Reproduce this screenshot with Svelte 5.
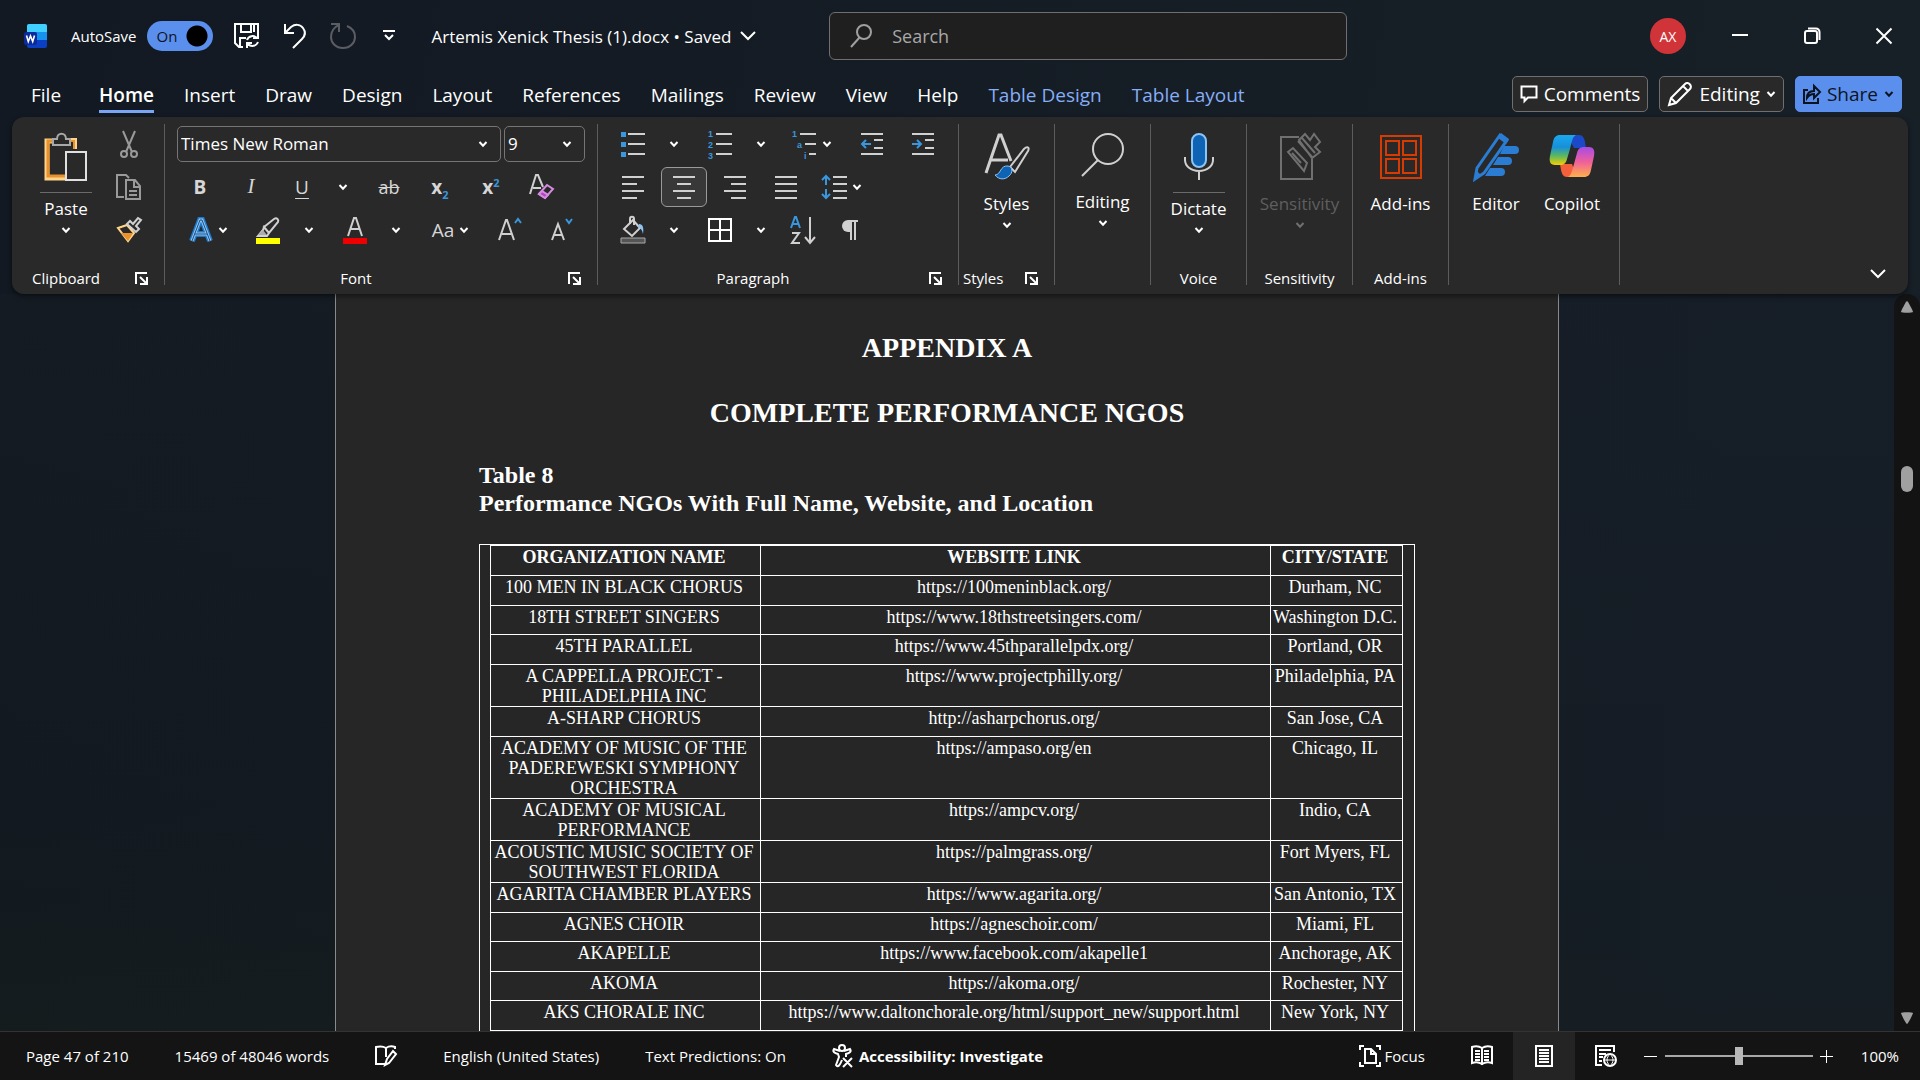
<script>
  let autosave = $state(true)
  let query = $state('')
  let font = $state('Times New Roman')
  let size = $state('9')
  let zoom = $state(100)
  let activeTab = $state('Home')
  let align = $state('center')
  let view = $state('print')

  const tabs = [
    'File', 'Home', 'Insert', 'Draw', 'Design', 'Layout', 'References',
    'Mailings', 'Review', 'View', 'Help', 'Table Design', 'Table Layout'
  ]

  // start and end of each bar in the four alignment icons
  const aligns = {
    left: [[0, 24], [0, 17], [0, 24], [0, 17]],
    center: [[0, 24], [4, 20], [0, 24], [4, 20]],
    right: [[0, 24], [7, 24], [0, 24], [7, 24]],
    justify: [[0, 24], [0, 24], [0, 24], [0, 24]]
  }

  const orgs = [
    ['100 MEN IN BLACK CHORUS', 'https://100meninblack.org/', 'Durham, NC'],
    ['18TH STREET SINGERS', 'https://www.18thstreetsingers.com/', 'Washington D.C.'],
    ['45TH PARALLEL', 'https://www.45thparallelpdx.org/', 'Portland, OR'],
    ['A CAPPELLA PROJECT - PHILADELPHIA INC', 'https://www.projectphilly.org/', 'Philadelphia, PA'],
    ['A-SHARP CHORUS', 'http://asharpchorus.org/', 'San Jose, CA'],
    ['ACADEMY OF MUSIC OF THE PADEREWESKI SYMPHONY ORCHESTRA', 'https://ampaso.org/en', 'Chicago, IL'],
    ['ACADEMY OF MUSICAL PERFORMANCE', 'https://ampcv.org/', 'Indio, CA'],
    ['ACOUSTIC MUSIC SOCIETY OF SOUTHWEST FLORIDA', 'https://palmgrass.org/', 'Fort Myers, FL'],
    ['AGARITA CHAMBER PLAYERS', 'https://www.agarita.org/', 'San Antonio, TX'],
    ['AGNES CHOIR', 'https://agneschoir.com/', 'Miami, FL'],
    ['AKAPELLE', 'https://www.facebook.com/akapelle1', 'Anchorage, AK'],
    ['AKOMA', 'https://akoma.org/', 'Rochester, NY'],
    ['AKS CHORALE INC', 'https://www.daltonchorale.org/html/support_new/support.html', 'New York, NY']
  ]
</script>

{#snippet chevron()}
  <svg class="chev" width="10" height="10" viewBox="0 0 10 10"><path d="M1.5 3 5 6.7 8.500 3" /></svg>
{/snippet}

{#snippet more(label)}
  <button class="more" aria-label={label}>{@render chevron()}</button>
{/snippet}

{#snippet launcher(label)}
  <button class="launcher" aria-label={label}>
    <svg width="13" height="13" viewBox="0 0 13 13"><path d="M1 12V1h11M5 5l6 6M12 5v7H5" /></svg>
  </button>
{/snippet}

<div class="app">
  <header class="titlebar">
    <svg class="logo" width="23" height="24" viewBox="0 0 23 24">
      <rect x="3" width="20" height="24" rx="2" fill="#0a3fc4" />
      <path d="M3 8h20v8H3z" fill="#1492ee" />
      <path d="M5 0h16a2 2 0 0 1 2 2v6H3V2a2 2 0 0 1 2-2z" fill="#3fd0ff" />
      <rect y="8" width="13" height="13" rx="2" fill="#0b2a9c" />
      <path d="M2.500 11.500 4.300 17.500 6.500 12 8.700 17.500 10.500 11.500" fill="none" stroke="#fff" stroke-width="1.600" />
    </svg>
    <label class="autosave">
      <span>AutoSave</span>
      <span class="switch">
        <input type="checkbox" role="switch" bind:checked={autosave} />
        <span class="state">{autosave ? 'On' : 'Off'}</span>
      </span>
    </label>
    <div class="quick">
      <button aria-label="Save">
        <svg width="26" height="26" viewBox="0 0 26 26">
          <path d="M9 24H5l-4-4V1h23v9M7 1v8h10V1M20 1v8M6 24v-9h6" />
          <path d="M13 17a6 6 0 0 1 10-2M24 10v5h-5M24 19a6 6 0 0 1-10 2M13 25v-5h5" />
        </svg>
      </button>
      <button aria-label="Undo">
        <svg width="26" height="26" viewBox="0 0 26 26"><path d="M3 1v9h9M3 10l6-6c4-3 9-3 12 1s2 8-1 11l-9 9" /></svg>
      </button>
      <button class="off" aria-label="Redo" disabled>
        <svg width="26" height="26" viewBox="0 0 26 26"><path d="M1 1h8v8M9 2C4 4 1 9 1 14c0 6 5 11 12 11s12-5 12-11c0-5-3-9-8-11" /></svg>
      </button>
      <button aria-label="Customize Quick Access Toolbar">
        <svg width="22" height="26" viewBox="0 0 22 26"><path d="M5 8h12M7 12l4 4 4-4" /></svg>
      </button>
    </div>
    <button class="docname">
      Artemis Xenick Thesis (1).docx • Saved
      <svg width="16" height="16" viewBox="0 0 16 16"><path d="m1 4 7 7 7-7" /></svg>
    </button>
    <label class="search">
      <svg width="22" height="24" viewBox="0 0 22 24"><circle cx="14" cy="8" r="7" /><path d="M9.500 13.500 1 23" /></svg>
      <input type="text" placeholder="Search" aria-label="Search" bind:value={query} />
    </label>
    <div class="window">
      <button class="avatar">AX</button>
      <button class="win" aria-label="Minimize">
        <svg width="18" height="18" viewBox="0 0 18 18"><path d="M1 8h16" /></svg>
      </button>
      <button class="win" aria-label="Restore">
        <svg width="18" height="18" viewBox="0 0 18 18"><rect x="2" y="4" width="12" height="12" rx="2" /><path d="M5 1.500h8a3.500 3.500 0 0 1 3.500 3.500v8" /></svg>
      </button>
      <button class="win" aria-label="Close">
        <svg width="18" height="18" viewBox="0 0 18 18"><path d="m1.500 1.500 15 15M16.500 1.500l-15 15" /></svg>
      </button>
    </div>
  </header>

  <nav class="tabs">
    {#each tabs as tab}
      <button class="tab" class:active={activeTab === tab} class:context={tab.startsWith('Table')} onclick={() => activeTab = tab}>{tab}</button>
    {/each}
    <div class="actions">
      <button class="action">
        <svg width="18" height="18" viewBox="0 0 18 18"><path d="M1.500 1.500h15v11H8L4.500 16v-3.500h-3z" /></svg>
        Comments
      </button>
      <button class="action">
        <svg width="26" height="26" viewBox="0 0 26 26"><path d="m2 24 2-7L18 3c3-3 8 2 5 5L9 22zM4 17l5 5M16 5l5 5" /></svg>
        Editing
        {@render chevron()}
      </button>
      <button class="action share">
        <svg width="18" height="20" viewBox="0 0 18 20"><path d="M5 6H1v13h14v-5M4 14c0-5 3-7 7-7V2l6 6-6 6v-4c-3 0-5 1-7 4z" /></svg>
        Share
        {@render chevron()}
      </button>
    </div>
  </nav>

  <section class="ribbon">
    <div class="group clipboard">
      <div class="body">
        <button class="big">
          <svg width="46" height="50" viewBox="0 0 46 50">
            <path d="M10 10H4v37h20" stroke="#ffd48a" stroke-width="5" />
            <path d="M10 10H5v35h19" stroke="#e8912d" stroke-width="3" />
            <path d="M26 9h6v9" stroke="#ffd48a" stroke-width="4" />
            <path d="M26 10h5v8" stroke="#e8912d" stroke-width="2" />
            <path d="M10 14V8h4c0-7 9-7 9 0h4v6z" fill="#292929" stroke="#a8a8a8" />
            <path d="M23 21h20v28H23z" fill="#292929" stroke="#e0e0e0" stroke-width="2" />
          </svg>
          <hr />
          Paste
          {@render chevron()}
        </button>
        <div class="side">
          <button class="tool" aria-label="Cut">
            <svg class="dim" width="24" height="28" viewBox="0 0 24 28"><path d="m6 0 9 21M18 0 9 21" /><circle cx="7" cy="23" r="3" /><circle cx="17" cy="23" r="3" /></svg>
          </button>
          <button class="tool" aria-label="Copy">
            <svg class="dim" width="26" height="26" viewBox="0 0 26 26"><path d="M8 23H1V1h9l3 3M10 6h9l5 6v13H10zM18 6v7h6M13 17h8M13 21h8" /></svg>
          </button>
          <button class="tool" aria-label="Format Painter">
            <svg width="26" height="26" viewBox="0 0 26 26">
              <path d="m2 12 9-3 7 8-6 8z" fill="#292929" stroke="#ffd48a" />
              <path d="M5 17h12l-5 8z" fill="#e8912d" stroke="none" />
              <path d="m11 8 3-3 3 3 5-6 3 2-5 6 3 3-3 3z" />
            </svg>
          </button>
        </div>
      </div>
      <footer><span>Clipboard</span>{@render launcher('Clipboard settings')}</footer>
    </div>

    <div class="group font">
      <div class="body rows">
        <div class="row combos">
          <span class="combo name">
            <select aria-label="Font" bind:value={font}><option>Times New Roman</option><option>Calibri</option></select>
            {@render chevron()}
          </span>
          <span class="combo size">
            <select aria-label="Font size" bind:value={size}><option>9</option><option>10</option></select>
            {@render chevron()}
          </span>
        </div>
        <div class="row">
          <button class="tool glyph bold">B</button>
          <button class="tool glyph italic">I</button>
          <button class="tool glyph under">U</button>{@render more('Underline styles')}
          <button class="tool glyph strike">ab</button>
          <button class="tool glyph bold"><span>x<sub>2</sub></span></button>
          <button class="tool glyph bold"><span>x<sup>2</sup></span></button>
          <button class="tool" aria-label="Clear formatting">
            <svg width="26" height="26" viewBox="0 0 26 26">
              <path d="M1 20 7 1h2l5 12M4 14h8" />
              <path d="m10 20 8-9 6 4-8 9z" stroke="#d58be0" />
              <path d="m10 20 3-3 6 4-3 3z" fill="#b145c2" stroke="#d58be0" />
            </svg>
          </button>
        </div>
        <div class="row">
          <button class="drop" aria-label="Text effects">
            <svg width="24" height="26" viewBox="0 0 24 26">
              <path d="M3 24 11 3h2l8 21M6 17h12" stroke="#1f78c8" stroke-width="6" />
              <path d="M3 24 11 3h2l8 21M6 17h12" stroke="#8cc4f5" stroke-width="3" />
              <path d="M3 24 11 3h2l8 21M6 17h12" stroke="#1c4f80" stroke-width="1" />
            </svg>
            {@render chevron()}
          </button>
          <button class="tool" aria-label="Highlight color">
            <svg width="26" height="28" viewBox="0 0 26 28">
              <path d="M9 11 19 3c3-2 5 1 4 3l-9 11zM9 11l5 6-2 3H3l5-6z" />
              <path d="m8 14 4 5H3z" fill="#aaa" stroke="none" />
              <path d="M1 22h24v6H1z" fill="#ff0" stroke="none" />
            </svg>
          </button>{@render more('Highlight colors')}
          <button class="tool" aria-label="Font color">
            <svg width="26" height="28" viewBox="0 0 26 28">
              <path d="m6 20 6-18h2l6 18M9 13h8" />
              <path d="M1 22h24v6H1z" fill="#e00" stroke="none" />
            </svg>
          </button>{@render more('Font colors')}
          <button class="drop case" aria-label="Change case"><span class="glyph">Aa</span>{@render chevron()}</button>
          <button class="tool" aria-label="Grow font">
            <svg width="26" height="26" viewBox="0 0 26 26"><path d="m2 23 7-20h1l7 20M5 17h9" /><path class="blue" d="m18 6 3-4 3 4" /></svg>
          </button>
          <button class="tool" aria-label="Shrink font">
            <svg width="26" height="26" viewBox="0 0 26 26"><path d="m4 23 6-16 6 16M6 18h8" /><path class="blue" d="m18 2 3 4 3-4" /></svg>
          </button>
        </div>
      </div>
      <footer><span>Font</span>{@render launcher('Font settings')}</footer>
    </div>

    <div class="group paragraph">
      <div class="body rows">
        <div class="row">
          <button class="tool" aria-label="Bullets">
            <svg width="26" height="26" viewBox="0 0 26 26">
              <path d="M8 3h17M8 13h17M8 23h17" />
              <path d="M1 1h5v5H1zM1 11h5v5H1zM1 21h5v5H1z" fill="#3a96dd" stroke="none" />
            </svg>
          </button>{@render more('Bullet styles')}
          <button class="tool" aria-label="Numbering">
            <svg width="26" height="26" viewBox="0 0 26 26">
              <path d="M9 3h16M9 13h16M9 23h16" />
              <text x="1" y="6">1</text><text x="1" y="17">2</text><text x="1" y="28">3</text>
            </svg>
          </button>{@render more('Number styles')}
          <button class="drop" aria-label="Multilevel list">
            <svg width="26" height="26" viewBox="0 0 26 26">
              <path d="M9 3h16M14 13h11M18 23h7" />
              <text x="1" y="6">1</text><text x="6" y="17">a</text><text x="13" y="28">i</text>
            </svg>
            {@render chevron()}
          </button>
          <button class="tool" aria-label="Decrease indent">
            <svg width="26" height="26" viewBox="0 0 26 26"><path d="M2 3h22M15 9h9M15 17h9M2 23h22" /><path class="blue" d="M3 13h9M7 9l-4 4 4 4" /></svg>
          </button>
          <button class="tool" aria-label="Increase indent">
            <svg width="26" height="26" viewBox="0 0 26 26"><path d="M2 3h22M15 9h9M15 17h9M2 23h22" /><path class="blue" d="M2 13h9M7 9l4 4-4 4" /></svg>
          </button>
        </div>
        <div class="row">
          {#each Object.entries(aligns) as [name, bars]}
            <button class="tool" class:pressed={align === name} aria-label="Align {name}" onclick={() => align = name}>
              <svg width="24" height="24" viewBox="0 0 24 24">
                {#each bars as [a, b], i}<path d="M{a + 1} {2 + i * 7}H{b - 1}" />{/each}
              </svg>
            </button>
          {/each}
          <button class="drop" aria-label="Line spacing">
            <svg width="26" height="26" viewBox="0 0 26 26"><path d="M12 3h14M12 10h14M12 17h14M12 24h14" /><path class="blue" d="M5 2v9M1 6l4-4 4 4M5 15v9M1 20l4 4 4-4" /></svg>
            {@render chevron()}
          </button>
        </div>
        <div class="row">
          <button class="tool" aria-label="Shading">
            <svg width="26" height="28" viewBox="0 0 26 28">
              <path d="m4 13 9-9 7 8-8 8zM10 8V3c0-3 4-3 4 0v6" />
              <path d="M19 8c4 0 5 4 4 10-1-4-2-6-5-7z" fill="#8cc4f5" stroke="none" />
              <path d="M1 22h24v5H1z" fill="#555" stroke="#aaa" stroke-width="1" />
            </svg>
          </button>{@render more('Shading colors')}
          <button class="tool" aria-label="Borders">
            <svg class="white" width="26" height="26" viewBox="0 0 26 26"><path d="M2 2h22v22H2zM13 2v22M2 13h22" /></svg>
          </button>{@render more('Border styles')}
          <button class="tool sort" aria-label="Sort">
            <svg width="26" height="28" viewBox="0 0 26 28"><path class="blue" d="m1 12 4-11h1l4 11M3 8h6" /><path d="M2 17h7L2 27h8M20 1v26M15 21l5 6 5-6" /></svg>
          </button>
          <button class="tool" aria-label="Show paragraph marks">
            <svg width="20" height="24" viewBox="0 0 20 24"><path d="M18 3H9M11 3v19M15 3v19" /><path d="M10 2H8a5 5 0 0 0 0 12h3V2z" fill="#d0d0d0" stroke="none" /></svg>
          </button>
        </div>
      </div>
      <footer><span>Paragraph</span>{@render launcher('Paragraph settings')}</footer>
    </div>

    <div class="group narrow styles">
      <div class="body">
        <button class="big">
          <svg width="48" height="50" viewBox="0 0 48 50">
            <path d="M3 42 16 4h2l10 26M8 29h17" stroke-width="3" />
            <path d="m27 36 14-18c3-3 6-2 4 2L32 41z" fill="#292929" stroke-width="2" />
            <path d="M12 44c6 0 5-10 13-9 5 1 5 7 1 10-4 4-10 4-14-1z" fill="#0f63b5" stroke="#8cc4f5" stroke-width="1" />
          </svg>
          Styles
          {@render chevron()}
        </button>
      </div>
      <footer><span>Styles</span>{@render launcher('Styles pane')}</footer>
    </div>

    <div class="group narrow">
      <div class="body">
        <button class="big">
          <svg width="46" height="48" viewBox="0 0 46 48"><circle cx="28" cy="18" r="15" /><path d="M18 29 2 45" /></svg>
          Editing
          {@render chevron()}
        </button>
      </div>
      <footer></footer>
    </div>

    <div class="group narrow">
      <div class="body">
        <button class="big">
          <svg width="32" height="50" viewBox="0 0 32 50">
            <rect x="9" y="3" width="14" height="33" rx="7" fill="#0f63b5" stroke="#8cc4f5" />
            <path d="M2 26v3c0 6 6 11 14 11s14-5 14-11v-3M16 40v9" />
          </svg>
          <hr />
          Dictate
          {@render chevron()}
        </button>
      </div>
      <footer><span>Voice</span></footer>
    </div>

    <div class="group narrow wide">
      <div class="body">
        <button class="big" disabled>
          <svg width="44" height="50" viewBox="0 0 44 50">
            <path d="M21 6H3v42h31V28" />
            <path d="m10 21 5-4 14 15-3 8zM14 22l9 10M20 10l14 16M24 7l13 15M21 9l6-6 5 6 4-6 6 8-5 5 5 5-8 6z" />
          </svg>
          Sensitivity
          {@render chevron()}
        </button>
      </div>
      <footer><span>Sensitivity</span></footer>
    </div>

    <div class="group narrow">
      <div class="body">
        <button class="big">
          <svg width="44" height="50" viewBox="0 0 44 50"><path d="M2 5h40v42H2zM7 10h13v14H7zM24 10h13v14H24zM7 28h13v14H7zM24 28h13v14H24z" stroke="#d83b01" /></svg>
          Add-ins
        </button>
      </div>
      <footer><span>Add-ins</span></footer>
    </div>

    <div class="group copilot">
      <div class="body">
        <button class="big">
          <svg width="46" height="50" viewBox="0 0 46 50">
            <path d="M31 15h11a4 4 0 0 1 0 8H27zM25 26h10a4 4 0 0 1 0 8H20zM17 37h11a4 4 0 0 1 0 8H12z" fill="#2b7cd3" stroke="none" />
            <path d="M2 48 4 37 27 4l7 5-23 33z" fill="#292929" stroke="#2b7cd3" stroke-width="3" />
            <path d="m25 7 3-5 8 6-3 5zM1 49l2-10 5 5z" fill="#2b7cd3" stroke="none" />
          </svg>
          Editor
        </button>
        <button class="big">
          <svg width="46" height="50" viewBox="0 0 46 50">
            <defs>
              <linearGradient id="cool" x1="0" y1="0" x2="0" y2="1"><stop offset="0" stop-color="#1ba8f0" /><stop offset="0.4" stop-color="#1690d8" /><stop offset="0.7" stop-color="#5cb85f" /><stop offset="1" stop-color="#f5d000" /></linearGradient>
              <linearGradient id="warm" x1="0" y1="0" x2="0" y2="1"><stop offset="0" stop-color="#a64be8" /><stop offset="0.5" stop-color="#f0609a" /><stop offset="1" stop-color="#ffb04a" /></linearGradient>
            </defs>
            <path d="M18 4h12c4 0 5 3 6 7l1 6H25z" fill="#1b49c8" stroke="none" />
            <path d="M28 46H18c-4 0-5-3-6-7l-1-6h12z" fill="#f5603c" stroke="none" />
            <path d="M11 4h16c-4 2-4 7-6 14l-3 10c-1 4-3 6-7 6H6c-5 0-6-4-5-9l3-14c1-5 3-7 7-7z" fill="url(#cool)" stroke="none" />
            <path d="M35 46H19c4-2 4-7 6-13l3-11c1-4 3-6 7-6h5c5 0 6 4 5 9l-3 14c-1 5-3 7-7 7z" fill="url(#warm)" stroke="none" />
          </svg>
          Copilot
        </button>
      </div>
      <footer></footer>
    </div>

    <button class="collapse" aria-label="Collapse ribbon">
      <svg width="16" height="16" viewBox="0 0 16 16"><path d="m1 4 7 7 7-7" /></svg>
    </button>
  </section>

  <main class="canvas">
    <article class="page">
      <h1>APPENDIX A</h1>
      <h1>COMPLETE PERFORMANCE NGOS</h1>
      <h2>Table 8<br />Performance NGOs With Full Name, Website, and Location</h2>
      <div class="frame">
        <table>
          <thead>
            <tr><th class="org">ORGANIZATION NAME</th><th>WEBSITE LINK</th><th class="city">CITY/STATE</th></tr>
          </thead>
          <tbody>
            {#each orgs as [name, link, city]}
              <tr><td>{name}</td><td>{link}</td><td>{city}</td></tr>
            {/each}
          </tbody>
        </table>
      </div>
    </article>
    <div class="scrollbar">
      <svg width="12" height="12" viewBox="0 0 12 12"><path d="M6 0c1 0 6 10 6 11s-12 1-12 0S5 0 6 0z" /></svg>
      <div class="track"><div class="thumb"></div></div>
      <svg width="12" height="12" viewBox="0 0 12 12"><path d="M6 12c1 0 6-10 6-11S0 0 0 1s5 11 6 11z" /></svg>
    </div>
  </main>

  <footer class="status">
    <div class="info">
      <button>Page 47 of 210</button>
      <button>15469 of 48046 words</button>
      <button aria-label="Proofing">
        <svg width="22" height="22" viewBox="0 0 22 22"><path d="M11 3C8 1 5 1 1 2v17h9M11 3c3-2 6-2 9-1v2M11 3v9M10 20l2-6 6-8 3 3-7 9z" /></svg>
      </button>
      <button>English (United States)</button>
      <button>Text Predictions: On</button>
      <button class="strong">
        <svg width="22" height="24" viewBox="0 0 22 24"><circle cx="10" cy="4" r="3" /><path d="M8 7 2 5C0 8 3 9 6 10l1 3-3 8c2 3 4 0 6-5M12 7l6-2c2 3-1 4-4 5v3M11 14l9 9M20 14l-9 9" /></svg>
        Accessibility: Investigate
      </button>
    </div>
    <div class="views">
      <button class="focus">
        <svg width="22" height="22" viewBox="0 0 22 22"><path d="M5 1H1v4M17 1h4v4M5 21H1v-4M17 21h4v-4M6 4h6l5 5v9H6zM12 4v5h5" /></svg>
        Focus
      </button>
      <button class="view" class:on={view === 'read'} aria-label="Read mode" onclick={() => view = 'read'}>
        <svg width="22" height="20" viewBox="0 0 22 20"><path d="M11 2C8 0 4 0 1 1v16c3-1 7-1 10 1 3-2 7-2 10-1V1c-3-1-7-1-10 1zM11 2v17M4 5h5M4 8h5M4 11h5M4 14h5M13 5h5M13 8h5M13 11h5M13 14h5" /></svg>
      </button>
      <button class="view" class:on={view === 'print'} aria-label="Print layout" onclick={() => view = 'print'}>
        <svg width="18" height="22" viewBox="0 0 18 22"><path d="M1 1h16v20H1zM4 5h10M4 8h10M4 11h10M4 14h10M4 17h10" /></svg>
      </button>
      <button class="view" class:on={view === 'web'} aria-label="Web layout" onclick={() => view = 'web'}>
        <svg width="22" height="22" viewBox="0 0 22 22"><path d="M7 20H1V1h18v6M4 5h12M4 9h7M4 12h4M4 16h3" /><circle cx="15" cy="15" r="6" /><path d="M9 15h12M15 9c-4 4-4 8 0 12M15 9c4 4 4 8 0 12" stroke-width="1" /></svg>
      </button>
      <div class="zoom">
        <button class="step" aria-label="Zoom out"><svg width="13" height="13" viewBox="0 0 13 13"><path d="M0 6.500h13" stroke-width="1" /></svg></button>
        <input type="range" min="0" max="200" aria-label="Zoom" bind:value={zoom} />
        <button class="step" aria-label="Zoom in"><svg width="13" height="13" viewBox="0 0 13 13"><path d="M0 6.500h13M6.500 0v13" stroke-width="1" /></svg></button>
        <button>{zoom}%</button>
      </div>
    </div>
  </footer>
</div>

<style>
  :global(body) {
    margin: 0;
    background: #141b24;
  }

  .app {
    height: 100vh;
    display: flex;
    flex-direction: column;
    overflow: hidden;
    font-family: 'Open Sans', 'Noto Sans', sans-serif;
    font-size: 15px;
    color: #fff;
    background: linear-gradient(100deg, #121922, #171f27 90%);
  }

  button, input, select {
    font: inherit;
    color: inherit;
    background: none;
    border: none;
    padding: 0;
    margin: 0;
  }

  button {
    display: flex;
    align-items: center;
    justify-content: center;
    white-space: nowrap;
  }

  svg {
    flex: none;
    fill: none;
    stroke: #d0d0d0;
    stroke-width: 2;
    overflow: visible;
  }

  .chev {
    stroke: #fff;
  }

  .titlebar {
    display: grid;
    grid-template-columns: auto auto auto 3fr minmax(200px, 518px) 4fr;
    align-items: center;
    height: 72px;
    padding-left: 24px;
  }

  .titlebar svg {
    stroke: #fff;
  }

  .titlebar .logo {
    stroke: none;
  }

  .autosave {
    display: flex;
    align-items: center;
    gap: 10px;
    margin-left: 24px;
  }

  .switch {
    position: relative;
    display: flex;
  }

  .switch input {
    appearance: none;
    width: 66px;
    height: 30px;
    border-radius: 15px;
    background: radial-gradient(circle at 50px 15px, #000 10px, #5b8fee 11px);
  }

  .state {
    position: absolute;
    left: 10px;
    top: 5px;
    line-height: 20px;
    color: #0c1420;
  }

  .quick {
    display: flex;
    gap: 22px;
    margin-left: 21px;
  }

  .titlebar .off svg {
    stroke: #5a5e63;
  }

  .docname {
    justify-self: start;
    gap: 8px;
    margin-left: 32px;
    font-size: 17px;
  }

  .search {
    display: flex;
    align-items: center;
    gap: 20px;
    height: 46px;
    padding: 0 20px;
    border: 1px solid #6f6f6f;
    border-radius: 6px;
    background: #1f1f1f;
  }

  .titlebar .search svg {
    stroke: #a0a0a0;
  }

  .search input {
    flex: 1;
    min-width: 0;
    outline: none;
    font-size: 18px;
  }

  .search input::placeholder {
    color: #a8a8a8;
    opacity: 1;
  }

  .window {
    display: flex;
    align-items: center;
    justify-content: flex-end;
  }

  .avatar {
    width: 36px;
    height: 36px;
    margin-right: 18px;
    border-radius: 50%;
    background: #d13438;
    font-size: 14px;
  }

  .win {
    width: 72px;
    height: 48px;
  }

  .tabs {
    display: flex;
    align-items: center;
    gap: 30px;
    height: 45px;
    padding: 0 18px 0 31px;
  }

  .tab {
    height: 36px;
    font-size: 19px;
    border-top: 3px solid transparent;
    border-bottom: 3px solid transparent;
  }

  .tab:first-child {
    margin-right: 8px;
  }

  .tab.active {
    font-weight: 600;
    border-bottom-color: #7aa5f5;
  }

  .tab.context {
    color: #86aef5;
  }

  .actions {
    display: flex;
    gap: 11px;
    margin-left: auto;
    padding-bottom: 2px;
  }

  .action {
    gap: 6px;
    height: 36px;
    padding: 0 7px;
    box-sizing: border-box;
    border: 1px solid #6f6f6f;
    border-radius: 5px;
    background: #292929;
    font-size: 19px;
  }

  .action svg {
    stroke: #fff;
  }

  .share {
    color: #0c1420;
    border-color: #5b8fee;
    background: #5b8fee;
  }

  .share svg {
    stroke: #0c1420;
  }

  .ribbon {
    position: relative;
    z-index: 1;
    display: flex;
    height: 177px;
    margin: 0 12px;
    border-radius: 12px;
    background: #292929;
    box-shadow: 0 2px 5px rgba(0, 0, 0, 0.5);
  }

  .group {
    display: flex;
    flex-direction: column;
    box-sizing: border-box;
    margin: 7px 0 9px;
    border-right: 1px solid #5c5c5c;
  }

  .clipboard { width: 153px; }
  .font { width: 433px; }
  .paragraph { width: 361px; }
  .narrow { width: 96px; }
  .wide { width: 106px; }
  .copilot { width: 171px; }

  .body {
    display: flex;
    justify-content: center;
    flex: 1;
  }

  .clipboard .body {
    padding-left: 4px;
  }

  .group footer {
    position: relative;
    display: flex;
    align-items: center;
    justify-content: center;
    height: 14px;
    padding-right: 50px;
  }

  .group.narrow footer {
    padding: 0;
  }

  .group.clipboard footer {
    justify-content: flex-start;
    padding-left: 20px;
  }

  .group.styles footer {
    justify-content: flex-start;
    padding-left: 4px;
  }

  .launcher {
    position: absolute;
    right: 16px;
    top: 1px;
  }

  .launcher svg {
    stroke: #fff;
  }

  .big {
    flex-direction: column;
    justify-content: flex-start;
    gap: 4px;
    width: 76px;
    padding-top: 7px;
    font-size: 17px;
    line-height: 24px;
  }

  .big svg:first-child {
    margin-bottom: 7px;
  }

  .big hr {
    width: 52px;
    margin: 0;
    border: none;
    border-top: 1px solid #6a6a6a;
  }

  .big:disabled {
    color: #5f5f5f;
  }

  .big:disabled svg {
    stroke: #707070;
  }

  .side {
    display: flex;
    flex-direction: column;
    margin-left: 2px;
  }

  .side .tool {
    height: 42px;
  }

  .rows {
    flex-direction: column;
    justify-content: flex-start;
    margin-top: -2px;
    padding-left: 12px;
  }

  .row {
    display: flex;
    align-items: center;
    gap: 5px;
    height: 43px;
  }

  .combos {
    gap: 3px;
  }

  .tool {
    width: 46px;
    height: 40px;
    box-sizing: border-box;
  }

  .sort {
    width: 38px;
  }

  .more {
    width: 36px;
    height: 40px;
    margin-left: -5px;
  }

  .drop {
    gap: 5px;
    width: 63px;
    height: 40px;
  }

  .paragraph .drop {
    justify-content: flex-start;
    width: 60px;
    padding-left: 7px;
  }

  .dim {
    stroke: #9a9a9a;
  }

  .white {
    stroke: #fff;
  }

  .blue {
    stroke: #3a96dd;
  }

  svg text {
    font: bold 9px 'Liberation Sans', sans-serif;
    fill: #3a96dd;
    stroke: none;
  }

  .pressed {
    border: 1px solid #9a9a9a;
    border-radius: 6px;
    background: #383838;
  }

  .glyph {
    font-size: 19px;
    color: #d6d6d6;
  }

  .bold { font-weight: 700; }
  .italic { font: italic 21px 'Liberation Serif', serif; }
  .under { text-decoration: underline; text-underline-offset: 4px; }
  .strike { text-decoration: line-through; font-size: 18px; }

  .glyph sub, .glyph sup {
    font-size: 11px;
    line-height: 11px;
    color: #3a96dd;
  }

  .combo {
    position: relative;
    display: flex;
  }

  .combo select {
    appearance: none;
    width: 100%;
    height: 36px;
    padding-left: 3px;
    border: 1px solid #757575;
    border-radius: 5px;
    font-size: 17px;
  }

  .combo option {
    background: #292929;
  }

  .combo .chev {
    position: absolute;
    right: 13px;
    top: 13px;
    pointer-events: none;
  }

  .name { width: 324px; }
  .size { width: 81px; }

  .collapse {
    align-self: flex-end;
    width: 36px;
    height: 40px;
    margin-left: auto;
    margin-right: 12px;
  }

  .collapse svg {
    stroke: #fff;
  }

  .canvas {
    flex: 1;
    min-height: 0;
    display: flex;
    background: linear-gradient(90deg, #131a2200, #18202a80 90%), linear-gradient(180deg, #141b23, #121920 70%, #141c1e);
  }

  .page {
    width: 1224px;
    box-sizing: border-box;
    margin: 0 auto;
    padding: 34px 143px 0;
    border: solid #8a8a8a;
    border-width: 0 1px;
    overflow: hidden;
    background: #262626;
    font-family: 'Liberation Serif', serif;
  }

  h1 {
    margin: 0 0 25px;
    font-size: 28px;
    line-height: 40px;
    text-align: center;
  }

  h2 {
    margin: 28px 0 27px;
    font-size: 24px;
    line-height: 28px;
  }

  .frame {
    height: 600px;
    padding: 0 11px 0 10px;
    border: 1px solid #fff;
  }

  table {
    width: 100%;
    table-layout: fixed;
    border-collapse: collapse;
    font-size: 18px;
    line-height: 20px;
    text-align: center;
  }

  th, td {
    height: 28px;
    padding: 1px 3px 0 0;
    vertical-align: top;
    border: 1px solid #fff;
  }

  tr:nth-child(even) td {
    height: 27px;
  }

  .org { width: 266px; }
  .city { width: 128px; }

  .scrollbar {
    display: flex;
    flex-direction: column;
    align-items: center;
    width: 26px;
    box-sizing: border-box;
    padding: 7px 0;
    border-radius: 13px 13px 0 0;
    background: #131313;
  }

  .scrollbar svg {
    fill: #a0a0a0;
    stroke: none;
  }

  .track {
    flex: 1;
    display: grid;
    grid-template-rows: 22fr 26px 75fr;
  }

  .thumb {
    grid-row: 2;
    width: 12px;
    border-radius: 6px;
    background: #a0a0a0;
  }

  .status {
    display: flex;
    align-items: center;
    justify-content: space-between;
    height: 48px;
    border-top: 1px solid #333;
    padding: 0 21px 0 26px;
    background: #141414;
    font-size: 15px;
  }

  .status svg {
    stroke: #fff;
  }

  .info, .views {
    display: flex;
    align-items: center;
    height: 100%;
  }

  .info {
    gap: 46px;
  }

  .info .strong {
    gap: 5px;
    font-weight: 700;
  }

  .focus {
    gap: 4px;
    margin-right: 26px;
  }

  .view {
    width: 62px;
    height: 100%;
  }

  .view.on {
    background: #242424;
  }

  .zoom {
    display: flex;
    align-items: center;
    margin-left: 4px;
  }

  .step {
    width: 20px;
    height: 20px;
  }

  .zoom input {
    appearance: none;
    width: 148px;
    height: 2px;
    margin: 0 4px;
    background: #a8a8a8;
  }

  .zoom input::-webkit-slider-thumb {
    appearance: none;
    width: 8px;
    height: 18px;
    background: #b8b8b8;
  }

  .step + button {
    margin-left: 24px;
  }
</style>
